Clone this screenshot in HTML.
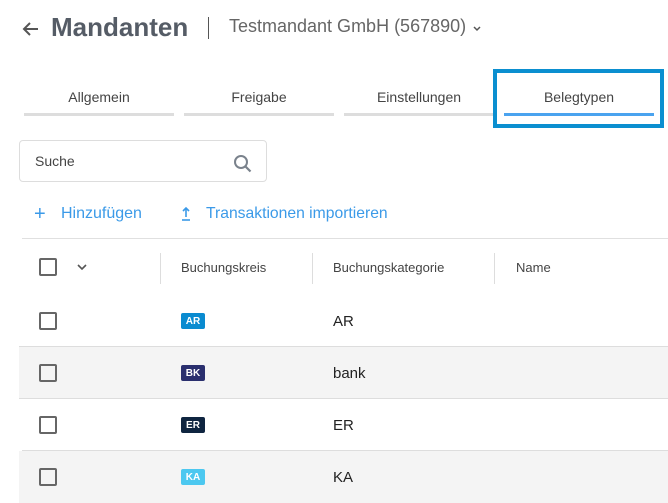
<!DOCTYPE html>
<html><head><meta charset="utf-8"><style>
*{margin:0;padding:0;box-sizing:border-box}
body{width:668px;height:498px;overflow:hidden;background:#fff;font-family:"Liberation Sans",sans-serif;position:relative;color:#333}
.a{position:absolute;white-space:nowrap}
.tab{position:absolute;top:89px;width:150px;text-align:center;font-size:14px;color:#444}
.tab i{position:absolute;left:0;right:0;top:24px;height:3px;background:#ddd}
.cb{position:absolute;left:39px;width:18px;height:18px;border:2px solid #666;border-radius:2px}
.row{position:absolute;left:19px;right:0;height:52px}
.bd{position:absolute;left:181px;width:24px;height:16px;border-radius:2px;color:#fff;font-size:10px;font-weight:bold;display:flex;align-items:center;justify-content:center}
.cat{position:absolute;left:333px;font-size:15px;color:#222}
.hd{position:absolute;top:260px;font-size:13px;color:#444}
.vl{position:absolute;top:253px;width:1px;height:31px;background:#ddd}
</style></head><body>
<svg class="a" style="left:21px;top:19px" width="20" height="20" viewBox="0 0 20 20"><path d="M17 10H3M9 4L3 10l6 6" stroke="#555" stroke-width="2" fill="none"/></svg>
<div class="a" style="left:51px;top:12px;font-size:26px;font-weight:bold;color:#555c66">Mandanten</div>
<div class="a" style="left:208px;top:17px;width:1px;height:22px;background:#555"></div>
<div class="a" style="left:229px;top:16px;font-size:18px;color:#666">Testmandant GmbH (567890)</div>
<svg class="a" style="left:472px;top:25px" width="10" height="8" viewBox="0 0 10 8"><path d="M2 2l3 3 3-3" stroke="#555" stroke-width="1.5" fill="none"/></svg>
<div class="tab" style="left:24px">Allgemein<i></i></div>
<div class="tab" style="left:184px">Freigabe<i></i></div>
<div class="tab" style="left:344px">Einstellungen<i></i></div>
<div class="tab" style="left:504px">Belegtypen<i style="background:#4aa3ef"></i></div>
<div class="a" style="left:493px;top:69px;width:171px;height:59px;border:4px solid #0b8fd0"></div>
<div class="a" style="left:19px;top:140px;width:248px;height:42px;border:1px solid #ddd;border-radius:4px"></div>
<div class="a" style="left:35px;top:153px;font-size:14px;color:#444">Suche</div>
<svg class="a" style="left:232px;top:153px" width="22" height="22" viewBox="0 0 22 22"><circle cx="9" cy="9" r="6" stroke="#7a828c" stroke-width="2" fill="none"/><path d="M13.5 13.5l5 5" stroke="#7a828c" stroke-width="2.2"/></svg>
<div class="a" style="left:34px;top:204px;font-size:20px;color:#3b9ae8;line-height:20px">+</div>
<div class="a" style="left:61px;top:205px;font-size:16px;color:#3b9ae8">Hinzufügen</div>
<svg class="a" style="left:180px;top:206px" width="12" height="16" viewBox="0 0 12 16"><path d="M6 11V2M3 5l3-3 3 3" stroke="#3b9ae8" stroke-width="1.6" fill="none"/><path d="M2 14h8" stroke="#3b9ae8" stroke-width="1.6"/></svg>
<div class="a" style="left:206px;top:205px;font-size:15.7px;color:#3b9ae8">Transaktionen importieren</div>
<div class="a" style="left:22px;top:238px;right:0;height:1px;background:#e0e0e0"></div>
<div class="cb" style="top:258px"></div>
<svg class="a" style="left:76px;top:262px" width="12" height="10" viewBox="0 0 12 10"><path d="M2 3l4 4 4-4" stroke="#555" stroke-width="1.6" fill="none"/></svg>
<div class="vl" style="left:160px"></div><div class="vl" style="left:312px"></div><div class="vl" style="left:494px"></div>
<div class="hd" style="left:181px">Buchungskreis</div>
<div class="hd" style="left:333px">Buchungskategorie</div>
<div class="hd" style="left:516px">Name</div>
<div class="row" style="top:295px;border-bottom:1px solid #ddd"></div>
<div class="row" style="top:347px;background:#f4f4f4;border-bottom:1px solid #ddd"></div>
<div class="row" style="top:399px;left:22px;border-bottom:1px solid #ddd"></div>
<div class="row" style="top:451px;background:#f4f4f4"></div>
<div class="cb" style="top:312px"></div><div class="bd" style="top:313px;background:#0a8bd0">AR</div><div class="cat" style="top:313px">AR</div>
<div class="cb" style="top:364px"></div><div class="bd" style="top:365px;background:#2a2f6e">BK</div><div class="cat" style="top:365px">bank</div>
<div class="cb" style="top:416px"></div><div class="bd" style="top:417px;background:#0f2540">ER</div><div class="cat" style="top:417px">ER</div>
<div class="cb" style="top:468px"></div><div class="bd" style="top:469px;background:#4cc8f0">KA</div><div class="cat" style="top:469px">KA</div>
</body></html>
